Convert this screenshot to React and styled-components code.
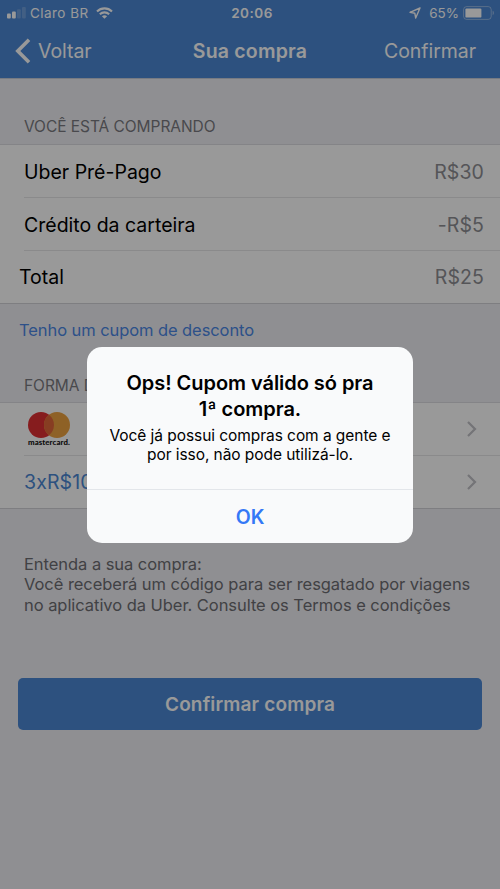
import styled, { createGlobalStyle } from "styled-components";

const GlobalStyle = createGlobalStyle`
  * {
    box-sizing: border-box;
  }
  body {
    margin: 0;
    background: #efeff4;
    font-family: Inter, "Liberation Sans", sans-serif;
    -webkit-font-smoothing: antialiased;
  }
  button {
    font-family: inherit;
    border: none;
    padding: 0;
    background: none;
  }
`;

const Screen = styled.div`
  position: relative;
  width: 500px;
  height: 889px;
  overflow: hidden;
  background: #efeff4;
`;

const Header = styled.header`
  height: 79px;
  background: #4b87d4;
  color: #fff;
  border-bottom: 1px solid #c6cddb;
`;

const StatusBar = styled.div`
  display: grid;
  grid-template-columns: 1fr auto 1fr;
  align-items: center;
  height: 25px;
  padding: 0 5px 0 7px;
`;

const StatusGroup = styled.div`
  display: flex;
  align-items: center;
  justify-content: ${(props) => (props.$end ? "flex-end" : "flex-start")};
`;

const Carrier = styled.span`
  margin: 0 7px 0 4px;
  font-size: 13.5px;
  letter-spacing: 0.45px;
`;

const Clock = styled.span`
  padding-left: 2px;
  font-weight: 600;
  font-size: 13.5px;
  letter-spacing: 0.5px;
`;

const Percent = styled.span`
  margin: 0 4px 0 8px;
  font-size: 13.5px;
`;

const NavBar = styled.nav`
  display: grid;
  grid-template-columns: 1fr auto 1fr;
  align-items: center;
  height: 52px;
  padding: 0 24px 0 15px;
`;

const NavButton = styled.button`
  display: flex;
  align-items: center;
  justify-self: ${(props) => (props.$end ? "end" : "start")};
  gap: 7px;
  color: #fff;
  font-size: 19.5px;
  letter-spacing: -0.05px;
`;

const NavTitle = styled.h1`
  margin: 0;
  padding-left: 9px;
  font-size: 19.5px;
  font-weight: 600;
  letter-spacing: 0.2px;
`;

const SectionLabel = styled.h2`
  display: flex;
  align-items: center;
  height: ${(props) => props.$height};
  margin: 0;
  padding: ${(props) => props.$top} 24px 0;
  color: #7a7a80;
  font-size: 15.5px;
  font-weight: 400;
  letter-spacing: -0.05px;
`;

const List = styled.div`
  background: #fff;
  border-top: 1px solid #dcdce1;
  border-bottom: 1px solid #d2d2d8;
`;

const Row = styled.div`
  display: flex;
  align-items: center;
  justify-content: space-between;
  height: ${(props) => props.$height || "53px"};
  margin-left: ${(props) => (props.$inset ? "24px" : "0")};
  padding: ${(props) => (props.$raised ? "0" : "1px")} 16px ${(props) => (props.$raised ? "1px" : "0")}
    ${(props) => (props.$inset ? "0" : "19px")};
  border-bottom: ${(props) => (props.$divided ? "1px solid #e6e6e8" : "none")};
`;

const RowLabel = styled.span`
  color: #000;
  font-size: 19.5px;
`;

const RowValue = styled.span`
  color: #8e8e93;
  font-size: 19.5px;
  letter-spacing: 0.1px;
`;

const Installments = styled.span`
  color: #4b87d4;
  font-size: 19.5px;
  letter-spacing: 0.1px;
`;

const CouponLink = styled.button`
  display: flex;
  align-items: center;
  height: 52px;
  margin-bottom: 2px;
  padding-left: 19px;
  color: #4b87e4;
  font-size: 16.5px;
  letter-spacing: -0.08px;
`;

const Note = styled.p`
  margin: 45px 0 0;
  padding-left: 24px;
  color: #6d6d72;
  font-size: 16.5px;
  line-height: 20.4px;
  letter-spacing: -0.05px;
  white-space: nowrap;
`;

const NoteLine = styled.span`
  display: block;
`;

const PrimaryButton = styled.button`
  display: block;
  width: 464px;
  height: 52px;
  margin: 63px 18px 0;
  border-radius: 5px;
  background: #4b87d4;
  color: #fff;
  font-size: 19px;
  font-weight: 600;
  letter-spacing: 0.15px;
`;

const Overlay = styled.div`
  position: absolute;
  inset: 0;
  display: flex;
  justify-content: center;
  align-items: center;
  background: rgba(0, 0, 0, 0.4);
`;

const Alert = styled.div`
  display: flex;
  flex-direction: column;
  width: 326px;
  height: 196px;
  border-radius: 15px;
  background: #f9fafb;
  text-align: center;
  overflow: hidden;
`;

const AlertBody = styled.div`
  flex: 1;
  padding-top: 23px;
  white-space: nowrap;
`;

const AlertTitle = styled.h3`
  margin: 0;
  color: #000;
  font-size: 20px;
  font-weight: 600;
  line-height: 26px;
  letter-spacing: -0.05px;
`;

const AlertText = styled.p`
  margin: 4px 0 0;
  color: #000;
  font-size: 15.5px;
  line-height: 19.5px;
  letter-spacing: -0.06px;
`;

const AlertAction = styled.button`
  height: 54px;
  padding-top: 2px;
  border-top: 1px solid #e3e6ea;
  color: #3478f6;
  font-size: 19.5px;
  font-weight: 600;
`;

const SignalIcon = () => (
  <svg width="19" height="12" viewBox="0 0 19 12" fill="#fff">
    <rect x="0" y="6.5" width="3.8" height="5" rx="1" />
    <rect x="5" y="4.5" width="3.8" height="7" rx="1" />
    <rect x="10" y="2.3" width="3.8" height="9.2" rx="1" opacity="0.2" />
    <rect x="15" y="0" width="3.8" height="11.5" rx="1" opacity="0.2" />
  </svg>
);

const WifiIcon = () => (
  <svg width="17" height="12" viewBox="0 0 17 12" fill="none" stroke="#fff">
    <path d="M1 4.4C5.2 0.3 11.8 0.3 16 4.4" strokeWidth="2.1" />
    <path d="M3.8 7.2C6.5 4.7 10.5 4.7 13.2 7.2" strokeWidth="2.1" />
    <path d="M8.5 11.8L5.9 9.3C7.4 8 9.6 8 11.1 9.3Z" fill="#fff" stroke="none" />
  </svg>
);

const LocationIcon = () => (
  <svg width="12" height="12" viewBox="0 0 12 12" fill="none" stroke="#fff" strokeWidth="1.4" strokeLinejoin="round">
    <path d="M11 1L1 5.3L5.8 6.2L6.7 11Z" />
  </svg>
);

const BatteryIcon = () => (
  <svg width="32" height="14" viewBox="0 0 32 14">
    <rect x="0.6" y="0.6" width="27.6" height="12.8" rx="3" fill="none" stroke="#fff" strokeOpacity="0.4" />
    <rect x="2.4" y="2.4" width="16" height="9.2" rx="1.2" fill="#fff" />
    <path d="M29.6 4.8C31.4 5.4 31.4 8.6 29.6 9.2Z" fill="#fff" opacity="0.4" />
  </svg>
);

const BackIcon = () => (
  <svg width="16" height="26" viewBox="0 0 16 26" fill="none" stroke="#fff" strokeWidth="3.6">
    <path d="M14 1.8L2.8 13L14 24.2" />
  </svg>
);

const ChevronIcon = () => (
  <svg width="17" height="16" viewBox="0 0 17 16" fill="none" stroke="#c1c1c6" strokeWidth="2.2">
    <path d="M1 1L8 8L1 15" />
  </svg>
);

const CardBrand = styled.div`
  display: flex;
  flex-direction: column;
  align-items: center;
  width: 44px;
  margin-left: 3px;
`;

const CardName = styled.span`
  color: #111;
  font-family: Lato, sans-serif;
  font-size: 7.8px;
  font-weight: 900;
  line-height: 8px;
  letter-spacing: 0.1px;
`;

const Mastercard = () => (
  <CardBrand>
    <svg width="42" height="26" viewBox="0 0 42 26">
      <circle cx="13" cy="13" r="13" fill="#e02f33" />
      <circle cx="29" cy="13" r="13" fill="#eda240" />
      <path d="M21 2.75A13 13 0 0 1 21 23.25A13 13 0 0 1 21 2.75Z" fill="#e2663a" />
    </svg>
    <CardName>mastercard.</CardName>
  </CardBrand>
);

const App = () => {
  return (
    <>
      <GlobalStyle />
      <Screen>
        <Header>
          <StatusBar>
            <StatusGroup>
              <SignalIcon />
              <Carrier>Claro BR</Carrier>
              <WifiIcon />
            </StatusGroup>
            <Clock>20:06</Clock>
            <StatusGroup $end>
              <LocationIcon />
              <Percent>65%</Percent>
              <BatteryIcon />
            </StatusGroup>
          </StatusBar>
          <NavBar>
            <NavButton>
              <BackIcon />
              Voltar
            </NavButton>
            <NavTitle>Sua compra</NavTitle>
            <NavButton $end>Confirmar</NavButton>
          </NavBar>
        </Header>

        <SectionLabel $height="65px" $top="29px">VOCÊ ESTÁ COMPRANDO</SectionLabel>
        <List>
          <Row $inset $divided>
            <RowLabel>Uber Pré-Pago</RowLabel>
            <RowValue>R$30</RowValue>
          </Row>
          <Row $inset $divided>
            <RowLabel>Crédito da carteira</RowLabel>
            <RowValue>-R$5</RowValue>
          </Row>
          <Row $raised $height="52px">
            <RowLabel>Total</RowLabel>
            <RowValue>R$25</RowValue>
          </Row>
        </List>

        <CouponLink>Tenho um cupom de desconto</CouponLink>

        <SectionLabel $height="44px" $top="10px">FORMA D</SectionLabel>
        <List>
          <Row $inset $divided $raised>
            <Mastercard />
            <ChevronIcon />
          </Row>
          <Row $inset $raised $height="52px">
            <Installments>3xR$10</Installments>
            <ChevronIcon />
          </Row>
        </List>

        <Note>
          <NoteLine>Entenda a sua compra:</NoteLine>
          <NoteLine>Você receberá um código para ser resgatado por viagens</NoteLine>
          <NoteLine>no aplicativo da Uber. Consulte os Termos e condições</NoteLine>
        </Note>

        <PrimaryButton>Confirmar compra</PrimaryButton>

        <Overlay>
          <Alert>
            <AlertBody>
              <AlertTitle>
                Ops! Cupom válido só pra
                <br />
                1ª compra.
              </AlertTitle>
              <AlertText>
                Você já possui compras com a gente e
                <br />
                por isso, não pode utilizá-lo.
              </AlertText>
            </AlertBody>
            <AlertAction>OK</AlertAction>
          </Alert>
        </Overlay>
      </Screen>
    </>
  );
};

export default App;
